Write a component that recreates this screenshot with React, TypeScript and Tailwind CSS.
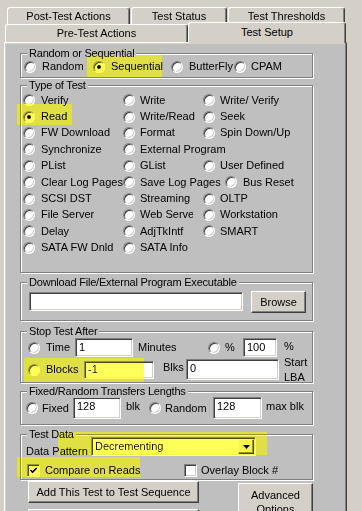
import type { ReactNode } from 'react'

const sunken =
  'bg-white border border-t-[#808080] border-l-[#808080] border-b-white border-r-white shadow-[inset_1px_1px_0_#404040,inset_-1px_-1px_0_#d4d0c8]'
const raised =
  'bg-[#d4d0c8] border border-t-white border-l-white border-b-[#404040] border-r-[#404040] shadow-[inset_-1px_-1px_0_#808080]'

function Radio({ checked = false }: { checked?: boolean }) {
  return (
    <span className="w-[12px] h-[12px] shrink-0 rounded-full bg-white border border-t-[#808080] border-l-[#808080] border-b-white border-r-white shadow-[inset_1px_1px_0_#404040,inset_-1px_-1px_0_#d4d0c8] flex items-center justify-center">
      {checked && <span className="w-[4px] h-[4px] rounded-full bg-black" />}
    </span>
  )
}

function Check({ checked = false }: { checked?: boolean }) {
  return (
    <span className={`w-[13px] h-[13px] shrink-0 flex items-center justify-center ${sunken}`}>
      {checked && (
        <svg width="9" height="9" viewBox="0 0 9 9">
          <path d="M1.5 4 L3.5 6.2 L7.8 1.8" fill="none" stroke="#000" strokeWidth="1.7" />
        </svg>
      )}
    </span>
  )
}

function Opt({ label, checked, gap = 'gap-[6px]', className = '' }: { label: string; checked?: boolean; gap?: string; className?: string }) {
  return (
    <span className={`flex items-center whitespace-nowrap ${gap} ${className}`}>
      <Radio checked={checked} />
      <span>{label}</span>
    </span>
  )
}

function Group({ title, className, children }: { title: string; className: string; children: ReactNode }) {
  return (
    <div className={`relative ml-[14px] w-[293px] border border-[#808080] shadow-[inset_1px_1px_0_#fff,1px_1px_0_#fff] ${className}`}>
      <span className="absolute left-[6px] top-[-7px] px-[2px] bg-[#bfbfbf] leading-[13px] tracking-[-0.2px]">{title}</span>
      {children}
    </div>
  )
}

function Tab({ label, className }: { label: string; className: string }) {
  return (
    <div className={`flex items-center justify-center bg-[#d4d0c8] border-t border-l border-t-white border-l-white border-r border-r-[#404040] rounded-t-[3px] shadow-[inset_-1px_0_0_#808080] ${className}`}>
      {label}
    </div>
  )
}

const testTypes: [string, string, string][] = [
  ['Verify', 'Write', 'Write/ Verify'],
  ['Read', 'Write/Read', 'Seek'],
  ['FW Download', 'Format', 'Spin Down/Up'],
  ['Synchronize', 'External Program', ''],
  ['PList', 'GList', 'User Defined'],
  ['Clear Log Pages', 'Save Log Pages', 'Bus Reset'],
  ['SCSI DST', 'Streaming', 'OLTP'],
  ['File Server', 'Web Server', 'Workstation'],
  ['Delay', 'AdjTkIntf', 'SMART'],
  ['SATA FW Dnld', 'SATA Info', ''],
]

// yellow marker strokes laid over the dialog
const marks = [
  'left-[81px] top-[11px] w-[75px] h-[22px]',
  'left-[11px] top-[60px] w-[55px] h-[21px]',
  'left-[18px] top-[314px] w-[120px] h-[24px]',
  'left-[52px] top-[388px] w-[209px] h-[23px]',
  'left-[11px] top-[413px] w-[123px] h-[20px]',
]

export default function App() {
  return (
    <div className="w-[362px] h-[511px] overflow-hidden bg-[#d4d0c8] text-black text-[11px] leading-[13px] font-['Liberation_Sans',Arial,sans-serif]">
      <div className="pt-[7px]">
        <div className="flex h-[17px] pl-[7px] gap-[1px]">
          <Tab label="Post-Test Actions" className="w-[123px] h-[17px]" />
          <Tab label="Test Status" className="w-[96px] h-[17px]" />
          <Tab label="Test Thresholds" className="w-[117px] h-[17px]" />
        </div>
        <div className="flex h-[18px] pl-[5px] items-end">
          <Tab label="Pre-Test Actions" className="w-[183px] h-[18px]" />
          <Tab label="Test Setup" className="w-[158px] h-[21px] mb-[-1px] relative z-10 pb-[1px]" />
        </div>

        <div className="ml-[4px] w-[343px] border-l border-t border-l-white border-t-white border-r border-r-[#404040] bg-[#d4d0c8] pt-[1px] pl-[1px] pr-[1px] shadow-[inset_-1px_0_0_#808080]">
          <div className="relative h-[470px] bg-[#bfbfbf] pt-[9px]">
            <Group title="Random or Sequential" className="h-[25px] pt-[6px] pl-[3px]">
              <div className="flex h-[13px] items-center">
                <Opt label="Random" className="w-[69px]" />
                <Opt label="Sequential" checked className="w-[78px]" />
                <Opt label="ButterFly" className="w-[63px]" />
                <Opt label="CPAM" gap="gap-[5px]" />
              </div>
            </Group>

            <Group title="Type of Test" className="mt-[7px] h-[188px] pt-[6px] pl-[2px]">
              <div className="grid grid-cols-[100px_80px_auto] auto-rows-[16.4px] items-center">
                {testTypes.map((row, i) =>
                  row.map((label, j) =>
                    label === '' ? (
                      <span key={`${i}-${j}`} />
                    ) : label === 'Bus Reset' ? (
                      <Opt key={`${i}-${j}`} label={label} className="ml-[22px] -mr-[22px]" />
                    ) : label === 'Web Server' ? (
                      <span key={`${i}-${j}`} className="flex items-center gap-[5px] whitespace-nowrap">
                        <Radio />
                        <span className="w-[53px] overflow-hidden">{label}</span>
                      </span>
                    ) : (
                      <Opt key={`${i}-${j}`} label={label} checked={label === 'Read'} gap={j === 0 ? 'gap-[6px]' : 'gap-[5px]'} />
                    )
                  )
                )}
              </div>
            </Group>

            <Group title="Download File/External Program Executable" className="mt-[9px] h-[39px] pt-[9px] pl-[8px]">
              <div className="flex items-start">
                <div className={`w-[214px] h-[19px] ${sunken}`} />
                <button className={`ml-[8px] w-[55px] h-[22px] -mt-[1px] ${raised}`}>Browse</button>
              </div>
            </Group>

            <Group title="Stop Test After" className="mt-[10px] h-[52px] pt-[6px] pl-[7px] flex">
              <div className="w-[256px]">
                <div className="flex items-center h-[19px]">
                  <Opt label="Time" className="w-[47px]" />
                  <div className={`w-[58px] h-[19px] pl-[3px] pt-[2px] ${sunken}`}>1</div>
                  <span className="w-[75px] pl-[5px]">Minutes</span>
                  <Opt label="%" gap="gap-[5px]" className="w-[35px]" />
                  <div className={`w-[34px] h-[19px] pl-[3px] pt-[2px] ${sunken}`}>100</div>
                </div>
                <div className="flex items-center h-[21px] mt-[2px]">
                  <Opt label="Blocks" className="w-[56px]" />
                  <div className={`w-[70px] h-[18px] pl-[3px] pt-[1px] ${sunken} bg-[#ffff66]`}>-1</div>
                  <span className="w-[32px] pl-[9px] -mt-[4px]">Blks</span>
                  <div className={`w-[93px] h-[21px] pl-[3px] pt-[2px] ${sunken}`}>0</div>
                </div>
              </div>
              <div className="pt-[1px] leading-[15.5px]">
                <div>%</div>
                <div>Start</div>
                <div>LBA</div>
              </div>
            </Group>

            <Group title="Fixed/Random Transfers Lengths" className="mt-[8px] h-[34px] pt-[5px] pl-[5px]">
              <div className="flex items-center h-[22px]">
                <Opt label="Fixed" gap="gap-[4px]" className="w-[47px]" />
                <div className={`w-[48px] h-[22px] pl-[3px] pt-[2px] ${sunken}`}>128</div>
                <span className="w-[28px] pl-[5px] -mt-[4px]">blk</span>
                <Opt label="Random" gap="gap-[4px]" className="w-[64px]" />
                <div className={`w-[49px] h-[22px] pl-[3px] pt-[2px] ${sunken}`}>128</div>
                <span className="pl-[4px] -mt-[4px]">max blk</span>
              </div>
            </Group>

            <Group title="Test Data" className="mt-[9px] h-[46px] pt-[2px] pl-[5px]">
              <div className="flex items-end">
                <span className="w-[65px] -mb-[2px]">Data Pattern</span>
                <div className={`w-[165px] h-[19px] flex items-center justify-between pl-[3px] ${sunken} bg-[#ffff66]`}>
                  <span>Decrementing</span>
                  <span className={`w-[16px] h-[15px] mr-[1px] flex items-center justify-center ${raised}`}>
                    <svg width="7" height="4" viewBox="0 0 7 4">
                      <path d="M0 0 H7 L3.5 4 Z" fill="#000" />
                    </svg>
                  </span>
                </div>
              </div>
              <div className="flex items-center mt-[8px] pl-[1px]">
                <Check checked />
                <span className="ml-[5px] w-[139px]">Compare on Reads</span>
                <Check />
                <span className="ml-[4px]">Overlay Block #</span>
              </div>
            </Group>

            <div className="flex mt-[1px] ml-[22px]">
              <div>
                <button className={`w-[171px] h-[22px] ${raised}`}>Add This Test to Test Sequence</button>
                <div className={`w-[171px] h-[22px] mt-[6px] ${raised}`} />
              </div>
              <button className={`ml-[39px] mt-[2px] w-[75px] h-[40px] leading-[14px] flex flex-col items-center justify-start pt-[4px] ${raised}`}>
                <span>Advanced</span>
                <span>Options</span>
              </button>
            </div>

            {marks.map((m) => (
              <div key={m} className={`absolute pointer-events-none ${m}`}>
                <div className="absolute inset-0 bg-[#ffff5a] mix-blend-multiply blur-[0.6px]" />
                <div className="absolute inset-0 bg-[#262600] mix-blend-color-dodge blur-[0.6px]" />
              </div>
            ))}
          </div>
        </div>
      </div>
    </div>
  )
}
